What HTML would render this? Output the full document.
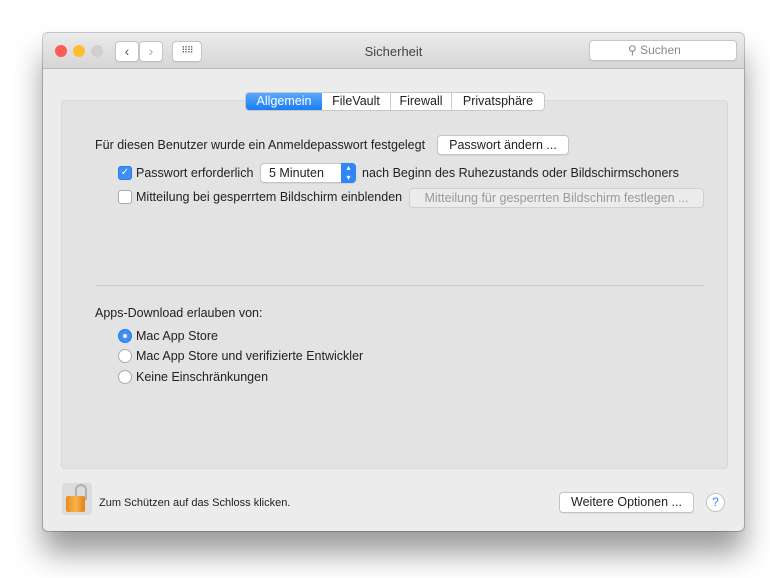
<!DOCTYPE html><html><head><style>
body{margin:0;width:770px;height:578px;background:#fff;font-family:"Liberation Sans",sans-serif;font-size:12px;color:#222;position:relative;overflow:hidden}
.a{position:absolute}
.win{left:43px;top:33px;width:701px;height:498px;background:#ececec;border-radius:5px;box-shadow:0 22px 30px rgba(0,0,0,.4),0 0 0 1px #c8c8c8}
.tb{left:0;top:0;width:701px;height:35px;background:linear-gradient(#ebebeb,#d6d6d6);border-bottom:1px solid #b8b8b8;border-radius:5px 5px 0 0}
.dot{width:12px;height:12px;border-radius:50%;top:12px}
.btn{background:#fff;border:1px solid #c4c4c4;border-radius:4px;box-shadow:0 1px 0 rgba(0,0,0,.05)}
.panel{left:61px;top:100px;width:665px;height:367px;background:#e3e3e3;border:1px solid #d8d8d8;border-radius:4px}
.cb{width:12px;height:12px;border:1px solid #aaa;border-radius:3px;background:#fff}
.rd{width:12px;height:12px;border:1px solid #aaa;border-radius:50%;background:#fff}
</style></head><body>
<div class="a win">
<div class="a tb"></div>
<div class="a dot" style="left:12px;background:#fc5b57;border:0"></div>
<div class="a dot" style="left:30px;background:#fdbc2e"></div>
<div class="a dot" style="left:48px;background:#d0d0d0"></div>
<div class="a btn" style="left:72px;top:8px;width:22px;height:19px;text-align:center;line-height:19px;color:#555;font-size:14px">‹</div>
<div class="a btn" style="left:96px;top:8px;width:22px;height:19px;text-align:center;line-height:19px;color:#aaa;font-size:14px">›</div>
<div class="a btn" style="left:129px;top:8px;width:28px;height:19px;text-align:center;line-height:17px;color:#555;font-size:9px;letter-spacing:-1px">⠿⠿</div>
<div class="a" style="left:0;width:701px;top:11px;text-align:center;font-size:13px;color:#444">Sicherheit</div>
<div class="a btn" style="left:546px;top:7px;width:146px;height:19px;color:#888;font-size:12px;line-height:19px"><span style="margin-left:38px">⚲ Suchen</span></div>
</div>
<div class="a panel"></div>
<div class="a" style="left:245px;top:92px;width:298px;height:17px;background:#fff;border:1px solid #c8c8c8;border-radius:4px;font-size:12.5px;line-height:17px">
<span class="a" style="left:0;width:76px;height:17px;background:linear-gradient(#5aa7fb,#1a7ef5);color:#fff;text-align:center;border-radius:3px 0 0 3px">Allgemein</span>
<span class="a" style="left:76px;width:68px;text-align:center;border-right:1px solid #ccc">FileVault</span>
<span class="a" style="left:145px;width:60px;text-align:center;border-right:1px solid #ccc">Firewall</span>
<span class="a" style="left:206px;width:92px;text-align:center">Privatsphäre</span>
</div>
<div class="a" style="left:95px;top:138px;font-size:12.5px">Für diesen Benutzer wurde ein Anmeldepasswort festgelegt</div>
<div class="a btn" style="left:437px;top:135px;width:130px;height:18px;text-align:center;line-height:18px;font-size:12.5px">Passwort ändern ...</div>
<div class="a cb" style="left:118px;top:166px;background:#3d8ef7;border-color:#2c7be5;color:#fff;font-size:10px;line-height:12px;text-align:center">✓</div>
<div class="a" style="left:136px;top:166px;font-size:12.5px">Passwort erforderlich</div>
<div class="a btn" style="left:260px;top:163px;width:94px;height:18px;line-height:18px;font-size:12.5px"><span style="margin-left:8px">5 Minuten</span><span class="a" style="right:-1px;top:-1px;width:15px;height:20px;background:#2f86f6;border-radius:0 4px 4px 0;color:#fff;font-size:8px;text-align:center;line-height:10px">▴<br>▾</span></div>
<div class="a" style="left:362px;top:166px;font-size:12.5px">nach Beginn des Ruhezustands oder Bildschirmschoners</div>
<div class="a cb" style="left:118px;top:190px"></div>
<div class="a" style="left:136px;top:190px;font-size:12.5px">Mitteilung bei gesperrtem Bildschirm einblenden</div>
<div class="a" style="left:409px;top:188px;width:293px;height:18px;border:1px solid #cfcfcf;border-radius:4px;background:#ececec;color:#999;text-align:center;line-height:18px;font-size:12.5px">Mitteilung für gesperrten Bildschirm festlegen ...</div>
<div class="a" style="left:95px;top:285px;width:609px;height:1px;background:#cdcdcd"></div>
<div class="a" style="left:95px;top:306px;font-size:12.5px">Apps-Download erlauben von:</div>
<div class="a rd" style="left:118px;top:329px;background:#3d8ef7;border-color:#2c7be5"><div class="a" style="left:4px;top:4px;width:4px;height:4px;border-radius:50%;background:#fff"></div></div>
<div class="a" style="left:136px;top:329px;font-size:12.5px">Mac App Store</div>
<div class="a rd" style="left:118px;top:349px"></div>
<div class="a" style="left:136px;top:349px;font-size:12.5px">Mac App Store und verifizierte Entwickler</div>
<div class="a rd" style="left:118px;top:370px"></div>
<div class="a" style="left:136px;top:370px;font-size:12.5px">Keine Einschränkungen</div>
<div class="a" style="left:62px;top:483px;width:30px;height:32px;background:#dcdcdc;border-radius:3px"></div>
<div class="a" style="top:484px;left:73px;width:8px;height:14px;border:2px solid #b0b0b0;border-bottom:0;border-radius:6px 6px 0 0;left:75px"></div>
<div class="a" style="left:66px;top:496px;width:19px;height:16px;background:linear-gradient(90deg,#e98a1d,#f7b44a,#e08216);border-radius:2px"></div>
<div class="a" style="left:99px;top:497px;font-size:11px">Zum Schützen auf das Schloss klicken.</div>
<div class="a btn" style="left:559px;top:492px;width:133px;height:19px;text-align:center;line-height:19px;font-size:12.5px">Weitere Optionen ...</div>
<div class="a" style="left:706px;top:493px;width:17px;height:17px;border-radius:50%;background:#fff;border:1px solid #c4c4c4;color:#2f86f6;text-align:center;line-height:17px;font-size:12px">?</div>
</body></html>
